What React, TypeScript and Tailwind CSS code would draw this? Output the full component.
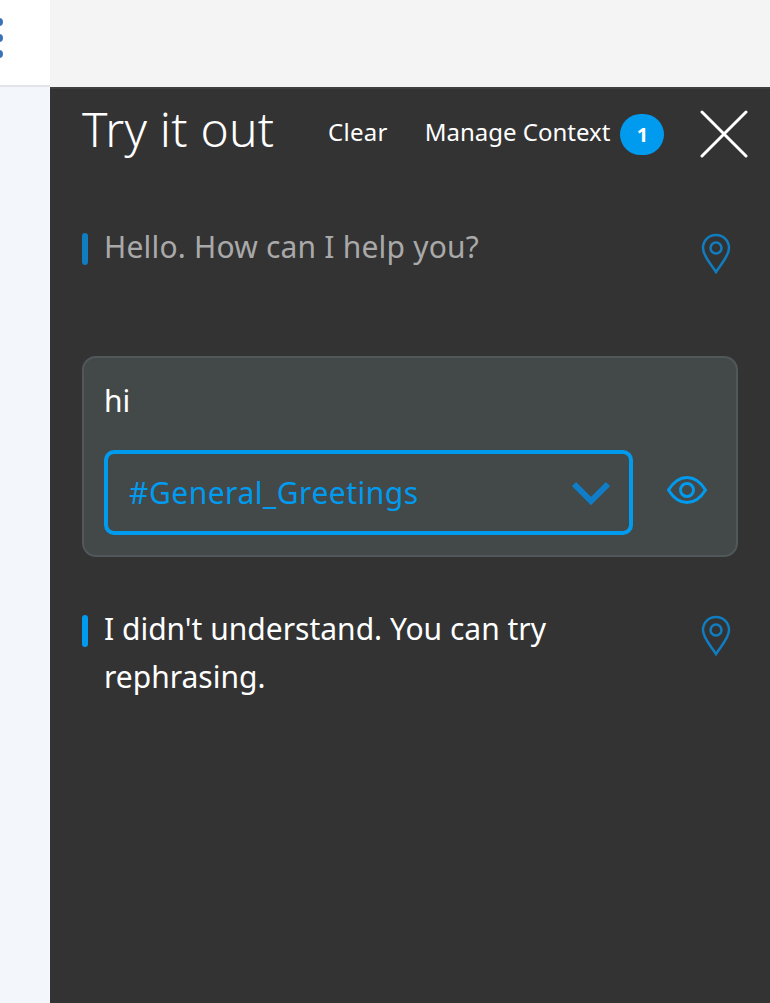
const Pin = () => (
    <svg width="30" height="41" viewBox="0 0 30 41" fill="none" stroke="#0f7dc0" strokeWidth="2.5" className="shrink-0">
        <path d="M15 39 C10 31 2 23 2 15 C2 7.5 8 2 15 2 C22 2 28 7.5 28 15 C28 23 20 31 15 39 Z" />
        <circle cx="15" cy="15" r="5.5" />
    </svg>
);

const Eye = () => (
    <svg width="40" height="28" viewBox="0 0 40 28" fill="none" stroke="#009bef" strokeWidth="3">
        <path d="M1.5 14 C7 5 13 1.5 20 1.5 C27 1.5 33 5 38.5 14 C33 23 27 26.5 20 26.5 C13 26.5 7 23 1.5 14 Z" />
        <circle cx="20" cy="14" r="6.5" />
    </svg>
);

const Chevron = () => (
    <svg width="38" height="24" viewBox="0 0 38 24" fill="none" stroke="#0f7dc8" strokeWidth="6">
        <path d="M2 3 L19 20 L36 3" />
    </svg>
);

const Close = () => (
    <svg width="48" height="48" viewBox="0 0 48 48" fill="none" stroke="#ffffff" strokeWidth="3" strokeLinecap="round">
        <path d="M2 2 L46 46 M46 2 L2 46" />
    </svg>
);

export default function App() {
    return (
        <div className="flex h-[1003px] w-[770px] overflow-hidden font-['Noto_Sans',sans-serif]">
            {/* Left rail */}
            <div className="flex w-[50px] shrink-0 flex-col bg-[#f3f7fc]">
                <div className="h-[87px] border-b-2 border-[#e0e4ea] bg-white pt-[18px]">
                    <svg width="6" height="42" viewBox="0 0 6 42" fill="#3b73b9">
                        <circle cx="-1" cy="4" r="4" />
                        <circle cx="-1" cy="20" r="4" />
                        <circle cx="-1" cy="36" r="4" />
                    </svg>
                </div>
            </div>

            <div className="flex min-w-0 flex-1 flex-col">
                <div className="h-[87px] shrink-0 bg-[#f4f4f4]" />

                {/* Try it out panel */}
                <div className="flex-1 border-t-2 border-[#3f3f3f] bg-[#333333] px-[32px] text-white">
                    <div className="flex h-[84px] items-center whitespace-nowrap">
                        <h1 className="w-[246px] shrink-0 text-[48px] leading-none font-light tracking-[0.2px] -mt-[4px]">Try it out</h1>
                        <span className="mt-[2px] text-[24px] tracking-[0.3px]">Clear</span>
                        <span className="mt-[2px] ml-[37px] text-[24px]">Manage Context</span>
                        <span className="mt-[7px] ml-[10px] flex h-[41px] w-[44px] shrink-0 items-center justify-center rounded-full bg-[#009bef] text-[20px] font-bold">
                            1
                        </span>
                        <span className="ml-[36px] -mr-[10px] mt-[5px] shrink-0">
                            <Close />
                        </span>
                    </div>

                    <div className="mt-[60px] flex items-start justify-between pr-[7px]">
                        <div className="flex items-start">
                            <div className="h-[32px] w-[6px] rounded-[3px] bg-[#0f7dc0]" />
                            <p className="ml-[16px] -mt-[10px] text-[30px] leading-[48px] tracking-[0.2px] text-[#a9a9a9]">
                                Hello. How can I help you?
                            </p>
                        </div>
                        <Pin />
                    </div>

                    <div className="mt-[82px] h-[201px] rounded-[14px] border-2 border-[#50585a] bg-[#434949] px-[20px] pt-[20px]">
                        <p className="text-[30px] leading-[48px] -mt-[1px]">hi</p>
                        <div className="mt-[25px] flex items-center">
                            <div className="flex h-[85px] w-[529px] items-center justify-between rounded-[10px] border-4 border-[#009bef] pr-[19px] pl-[21px]">
                                <span className="-mt-[1px] text-[30px] tracking-[0.5px] text-[#009bef]">#General_Greetings</span>
                                <Chevron />
                            </div>
                            <span className="ml-[34px] -mt-[6px]">
                                <Eye />
                            </span>
                        </div>
                    </div>

                    <div className="mt-[58px] flex items-start justify-between pr-[7px]">
                        <div className="flex items-start">
                            <div className="h-[32px] w-[6px] rounded-[3px] bg-[#009bef]" />
                            <p className="ml-[16px] -mt-[10px] w-[500px] text-[30px] leading-[48px]">
                                I didn't understand. You can try rephrasing.
                            </p>
                        </div>
                        <Pin />
                    </div>
                </div>
            </div>
        </div>
    );
}
